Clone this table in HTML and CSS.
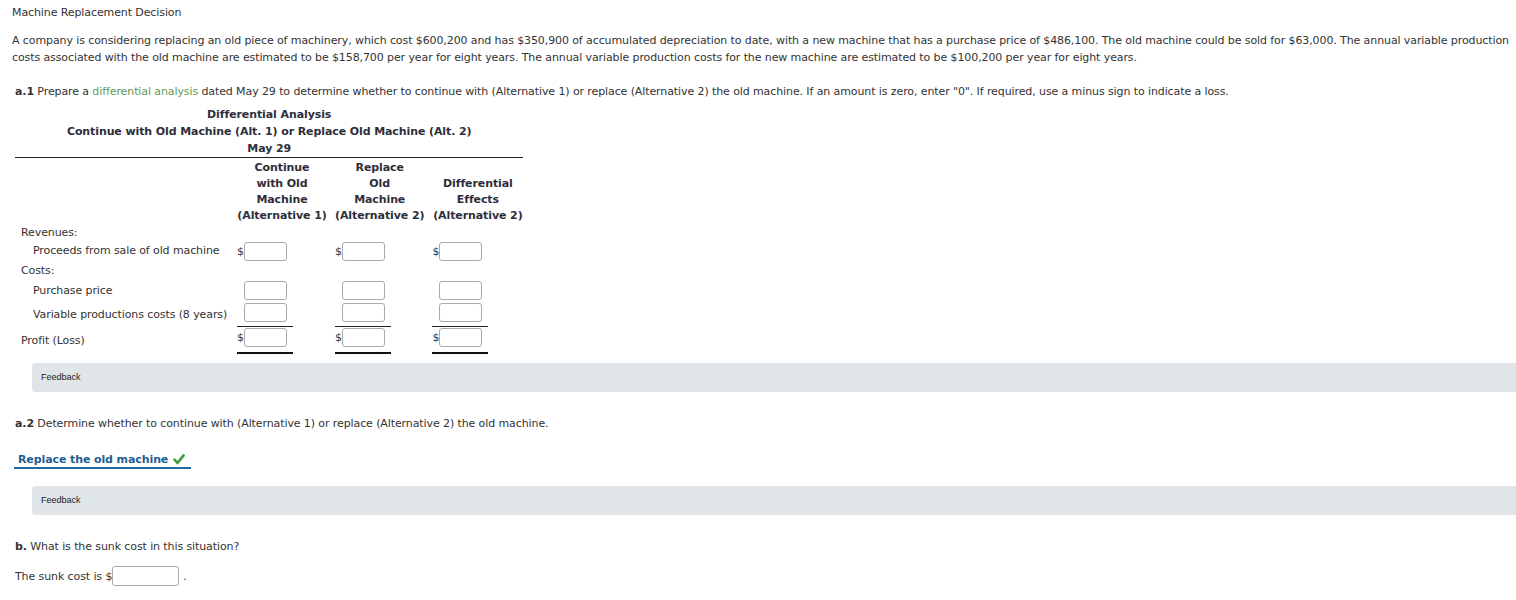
FILE: index.html
```html
<!DOCTYPE html>
<html lang="en">
<head>
<meta charset="utf-8">
<title>Machine Replacement Decision</title>
<link rel="stylesheet" href="styles.css">
</head>
<body>
<div class="page">
  <div class="title">Machine Replacement Decision</div>
  <p class="problem">A company is considering replacing an old piece of machinery, which cost $600,200 and has $350,900 of accumulated depreciation to date, with a new machine that has a purchase price of $486,100. The old machine could be sold for $63,000. The annual variable production costs associated with the old machine are estimated to be $158,700 per year for eight years. The annual variable production costs for the new machine are estimated to be $100,200 per year for eight years.</p>

  <div class="part part-a1">
    <p class="q q-a1"><b>a.1</b> Prepare a <span class="link">differential analysis</span> dated May 29 to determine whether to continue with (Alternative 1) or replace (Alternative 2) the old machine. If an amount is zero, enter "0". If required, use a minus sign to indicate a loss.</p>

    <table class="da">
      <colgroup>
        <col class="c-label">
        <col class="c-v1">
        <col class="c-v2">
        <col class="c-v3">
      </colgroup>
      <thead>
        <tr class="cap"><th colspan="4">Differential Analysis</th></tr>
        <tr class="cap"><th colspan="4">Continue with Old Machine (Alt. 1) or Replace Old Machine (Alt. 2)</th></tr>
        <tr class="cap last"><th colspan="4">May 29</th></tr>
        <tr class="colhead">
          <th></th>
          <th class="pr">Continue<br>with Old<br>Machine<br>(Alternative 1)</th>
          <th class="pr">Replace<br>Old<br>Machine<br>(Alternative 2)</th>
          <th>Differential<br>Effects<br>(Alternative 2)</th>
        </tr>
      </thead>
      <tbody>
        <tr class="r-rev"><td class="lbl">Revenues:</td><td></td><td></td><td></td></tr>
        <tr class="r-proc">
          <td class="lbl ind">Proceeds from sale of old machine</td>
          <td><div class="val"><span class="cur">$</span><input class="amt" type="text"></div></td>
          <td><div class="val"><span class="cur">$</span><input class="amt" type="text"></div></td>
          <td><div class="val"><span class="cur">$</span><input class="amt" type="text"></div></td>
        </tr>
        <tr class="r-costs"><td class="lbl">Costs:</td><td></td><td></td><td></td></tr>
        <tr class="r-purch">
          <td class="lbl ind">Purchase price</td>
          <td><div class="val"><span class="cur"></span><input class="amt" type="text"></div></td>
          <td><div class="val"><span class="cur"></span><input class="amt" type="text"></div></td>
          <td><div class="val"><span class="cur"></span><input class="amt" type="text"></div></td>
        </tr>
        <tr class="r-var">
          <td class="lbl ind">Variable productions costs (8 years)</td>
          <td><div class="val"><span class="cur"></span><input class="amt" type="text"></div></td>
          <td><div class="val"><span class="cur"></span><input class="amt" type="text"></div></td>
          <td><div class="val"><span class="cur"></span><input class="amt" type="text"></div></td>
        </tr>
        <tr class="r-profit">
          <td class="lbl">Profit (Loss)</td>
          <td><div class="val total"><span class="cur">$</span><input class="amt" type="text"></div></td>
          <td><div class="val total"><span class="cur">$</span><input class="amt" type="text"></div></td>
          <td><div class="val total"><span class="cur">$</span><input class="amt" type="text"></div></td>
        </tr>
      </tbody>
    </table>
  </div>

  <div class="feedback feedback-1">Feedback</div>

  <div class="part">
    <p class="q q-a2"><b>a.2</b> Determine whether to continue with (Alternative 1) or replace (Alternative 2) the old machine.</p>
    <div class="answer">
      <span class="answer-text">Replace the old machine</span>
      <svg class="check" width="12" height="11" viewBox="0 0 12 11" aria-hidden="true"><path d="M1.5 5.6 L4.5 9 L10.6 1.4" fill="none" stroke="#3d9a3d" stroke-width="2.6" stroke-linecap="round" stroke-linejoin="round"/></svg>
    </div>
  </div>

  <div class="feedback feedback-2">Feedback</div>

  <div class="part">
    <p class="q q-b"><b>b.</b> What is the sunk cost in this situation?</p>
    <p class="q q-sunk">The sunk cost is $<input class="amt sunk" type="text"> .</p>
  </div>
</div>
</body>
</html>
```

FILE: styles.css
```css
html, body {
  margin: 0;
  padding: 0;
  background: #ffffff;
}

body {
  font-family: Verdana, "DejaVu Sans", sans-serif;
  font-size: 11px;
  letter-spacing: -0.1px;
  color: #333333;
  width: 1516px;
  overflow: hidden;
}

.page {
  padding: 5px 0 0 12px;
}

.title {
  line-height: 16px;
}

.problem {
  margin: 11px 4px 0 0;
  line-height: 17px;
}

.part {
  padding-left: 3px;
}

.q {
  margin: 0;
  line-height: 17px;
}

.q-a1 {
  margin-top: 17px;
}

.link {
  color: #5f9a55;
}

/* Differential analysis table */
.da {
  border-collapse: collapse;
  margin-top: 6px;
  color: #333333;
}

.c-label { width: 222px; }
.c-v1 { width: 98px; }
.c-v2 { width: 97px; }
.c-v3 { width: 91px; }

.da th,
.da td {
  padding: 0;
}

.da .cap th {
  font-weight: bold;
  line-height: 17px;
  text-align: center;
  color: #2e2e3a;
}

.da .cap.last th {
  border-bottom: 1px solid #222222;
}

.da .colhead th {
  font-weight: bold;
  line-height: 16px;
  padding-top: 2px;
  text-align: center;
  vertical-align: bottom;
  color: #2e2e3a;
  white-space: nowrap;
}

.da .colhead th.pr {
  padding-right: 8px;
}

.da td {
  vertical-align: top;
}

.lbl {
  white-space: nowrap;
  padding-left: 6px !important;
}

.lbl.ind {
  padding-left: 18px !important;
}

.r-rev .lbl { line-height: 16px; padding-top: 1px; }
.r-proc .lbl,
.r-costs .lbl,
.r-purch .lbl { line-height: 20px; }
.r-var .lbl { line-height: 16px; padding-top: 6px; padding-bottom: 3px; }
.r-profit .lbl { line-height: 16px; padding-top: 7px; }

.val {
  display: flex;
  align-items: flex-start;
  width: 56px;
  box-sizing: border-box;
}

.r-proc .val { padding-top: 1px; }
.r-purch .val { padding-top: 0; }
.r-var .val { padding-top: 2px; padding-bottom: 4px; }

.val.total {
  border-top: 1px solid #222222;
  border-bottom: 2px solid #111111;
  padding-top: 1px;
  padding-bottom: 5px;
}

.cur {
  width: 7px;
  flex: none;
  line-height: 19px;
  font-size: 11px;
}

.amt {
  box-sizing: border-box;
  width: 43px;
  height: 19px;
  margin: 0;
  padding: 0 3px;
  border: 1px solid #aaaaaa;
  border-radius: 3px;
  background: #ffffff;
  font-family: Verdana, "DejaVu Sans", sans-serif;
  font-size: 11px;
}

/* Feedback bars */
.feedback {
  margin-left: 20px;
  height: 29px;
  box-sizing: border-box;
  padding: 9px 0 0 9px;
  background: #dfe5e8;
  border-radius: 3px 0 0 3px;
  font-family: Arial, "Liberation Sans", sans-serif;
  font-size: 9px;
  letter-spacing: 0;
  line-height: 11px;
  color: #222222;
}

.feedback-1 { margin-top: 9px; }
.feedback-2 { margin-top: 17px; }

.q-a2 { margin-top: 23px; }

.answer {
  display: inline-flex;
  align-items: center;
  gap: 5px;
  margin-top: 20px;
  margin-left: -1px;
  padding: 0 6px 0 4px;
  border-bottom: 2px solid #1f6aa5;
  line-height: 15px;
}

.answer-text {
  font-weight: bold;
  color: #1f5e94;
}

.check {
  display: block;
}

.q-b { margin-top: 23px; }

.q-sunk {
  margin-top: 11px;
  display: flex;
  align-items: center;
  line-height: 19px;
}

.amt.sunk {
  width: 67px;
  height: 20px;
  margin-right: 4px;
}
```
